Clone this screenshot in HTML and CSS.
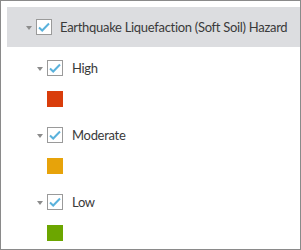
FILE: index.html
```html
<!DOCTYPE html>
<html lang="en">
<head>
    <title>Legend</title>
    <link rel="stylesheet" href="styles.css">
</head>
<body>
  <div class="panel">
    <div class="layer-row">
      <span class="caret"></span>
      <span class="check">
        <svg width="16" height="16" viewBox="0 0 16 16"><path d="M3 8.5 L6.2 11.5 L13 4.5" fill="none" stroke="#5ab2dc" stroke-width="2"/></svg>
      </span>
      <span class="label">Earthquake Liquefaction (Soft Soil) Hazard</span>
    </div>

    <ul class="legend">
      <li class="class-item">
        <div class="class-row">
          <span class="caret"></span>
          <span class="check">
            <svg width="16" height="16" viewBox="0 0 16 16"><path d="M3 8.5 L6.2 11.5 L13 4.5" fill="none" stroke="#5ab2dc" stroke-width="2"/></svg>
          </span>
          <span class="label">High</span>
        </div>
        <div class="swatch swatch-high"></div>
      </li>
      <li class="class-item">
        <div class="class-row">
          <span class="caret"></span>
          <span class="check">
            <svg width="16" height="16" viewBox="0 0 16 16"><path d="M3 8.5 L6.2 11.5 L13 4.5" fill="none" stroke="#5ab2dc" stroke-width="2"/></svg>
          </span>
          <span class="label">Moderate</span>
        </div>
        <div class="swatch swatch-moderate"></div>
      </li>
      <li class="class-item">
        <div class="class-row">
          <span class="caret"></span>
          <span class="check">
            <svg width="16" height="16" viewBox="0 0 16 16"><path d="M3 8.5 L6.2 11.5 L13 4.5" fill="none" stroke="#5ab2dc" stroke-width="2"/></svg>
          </span>
          <span class="label">Low</span>
        </div>
        <div class="swatch swatch-low"></div>
      </li>
    </ul>
  </div>
</body>
</html>
```

FILE: styles.css
```css
body {
  margin: 0;
  background-color: white;
  font-family: Lato, "Open Sans", sans-serif;
  color: #3a3a3a;
}

.panel {
  width: 301px;
  height: 250px;
  box-sizing: border-box;
  border: 1px solid #8a8a8a;
  padding: 6px 0 0 6px;
  overflow: hidden;
}

.layer-row {
  height: 40px;
  background-color: #dcdde0;
  display: flex;
  align-items: center;
  padding-left: 19px;
}

.caret {
  width: 0;
  height: 0;
  border-left: 3px solid transparent;
  border-right: 3px solid transparent;
  border-top: 4px solid #8c8c8c;
  margin-top: 1px;
}

.check {
  width: 16px;
  height: 16px;
  box-sizing: border-box;
  border: 1px solid #9a9a9a;
  background-color: white;
  display: flex;
  align-items: center;
  justify-content: center;
}

.check svg {
  display: block;
  flex: none;
}

.layer-row .check {
  margin-left: 4px;
}

.label {
  font-size: 13px;
  letter-spacing: -0.3px;
  white-space: nowrap;
}

.layer-row .label {
  margin-left: 8px;
}

.legend {
  list-style: none;
  margin: 13px 0 0 0;
  padding: 0 0 0 30px;
}

.class-item {
  margin-bottom: 20px;
}

.class-row {
  display: flex;
  align-items: center;
  height: 16px;
}

.class-row .check {
  margin-left: 4px;
}

.class-row .label {
  margin-left: 9px;
}

.swatch {
  width: 16px;
  height: 16px;
  margin-top: 15px;
  margin-left: 10px;
}

.swatch-high {
  background-color: #d93d0b;
}

.swatch-moderate {
  background-color: #e7a30a;
}

.swatch-low {
  background-color: #6ca600;
}
```
